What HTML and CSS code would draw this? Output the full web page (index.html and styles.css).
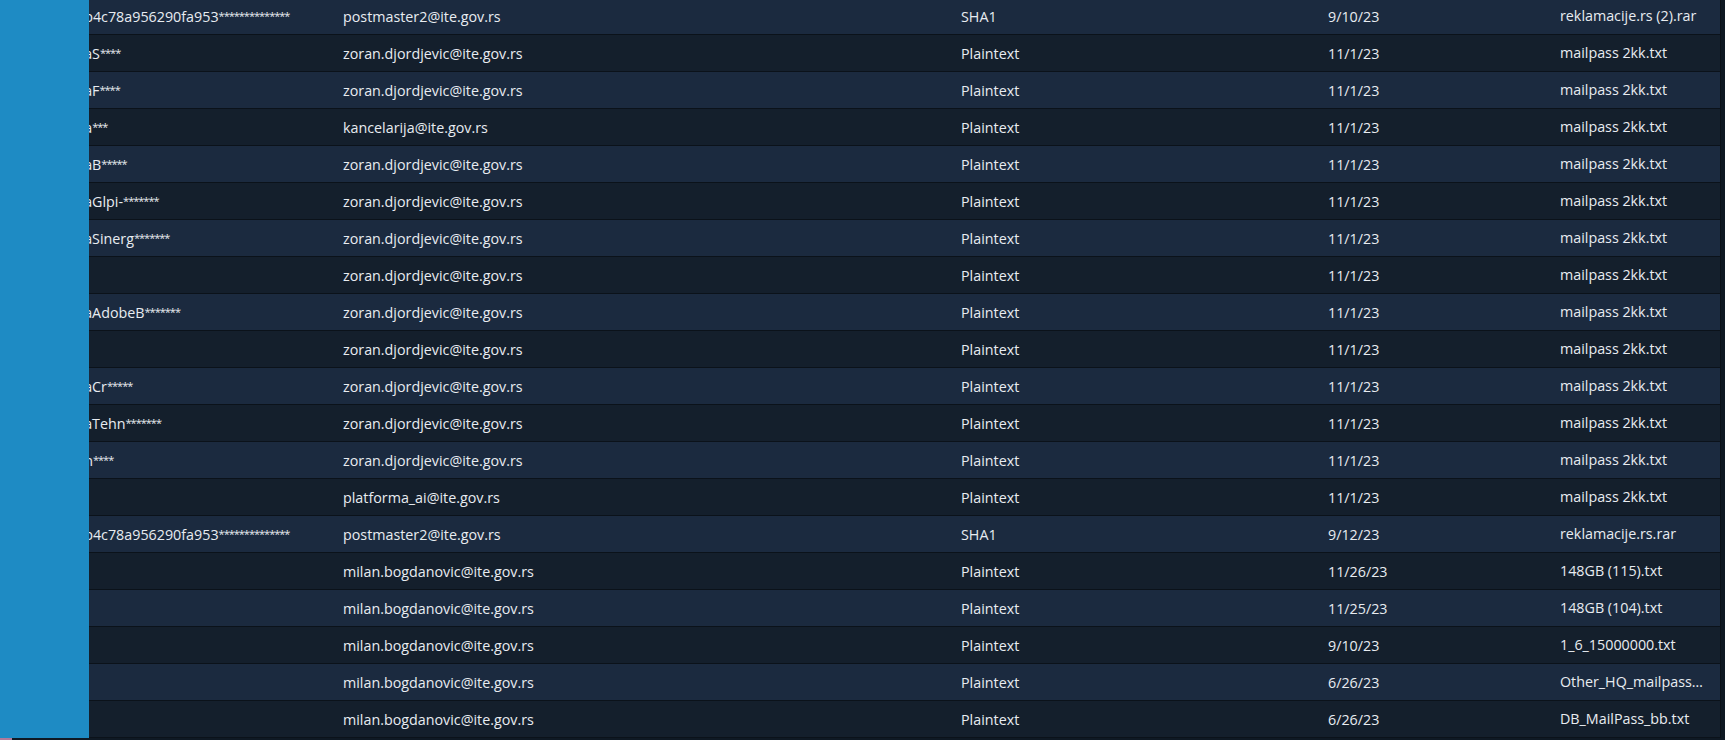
FILE: index.html
```html
<!DOCTYPE html>
<html lang="sr">
<head>
<meta charset="utf-8">
<title>Leaks</title>
<link rel="stylesheet" href="styles.css">
</head>
<body>
<div class="page">
  <div class="main">
    <aside class="sidebar"></aside>
    <div class="viewport">
      <div class="table">
        <div class="row"><div class="cell c1">0b4c78a956290fa953<span class="mask">**************</span></div><div class="cell">postmaster2@ite.gov.rs</div><div class="cell">SHA1</div><div class="cell">9/10/23</div><div class="cell c5">reklamacije.rs (2).rar</div></div>
        <div class="row"><div class="cell c1">0aS<span class="mask">****</span></div><div class="cell">zoran.djordjevic@ite.gov.rs</div><div class="cell">Plaintext</div><div class="cell">11/1/23</div><div class="cell c5">mailpass 2kk.txt</div></div>
        <div class="row"><div class="cell c1">0aF<span class="mask">****</span></div><div class="cell">zoran.djordjevic@ite.gov.rs</div><div class="cell">Plaintext</div><div class="cell">11/1/23</div><div class="cell c5">mailpass 2kk.txt</div></div>
        <div class="row"><div class="cell c1">0a<span class="mask">***</span></div><div class="cell">kancelarija@ite.gov.rs</div><div class="cell">Plaintext</div><div class="cell">11/1/23</div><div class="cell c5">mailpass 2kk.txt</div></div>
        <div class="row"><div class="cell c1">0aB<span class="mask">*****</span></div><div class="cell">zoran.djordjevic@ite.gov.rs</div><div class="cell">Plaintext</div><div class="cell">11/1/23</div><div class="cell c5">mailpass 2kk.txt</div></div>
        <div class="row"><div class="cell c1">0aGlpi-<span class="mask">*******</span></div><div class="cell">zoran.djordjevic@ite.gov.rs</div><div class="cell">Plaintext</div><div class="cell">11/1/23</div><div class="cell c5">mailpass 2kk.txt</div></div>
        <div class="row"><div class="cell c1">0aSinerg<span class="mask">*******</span></div><div class="cell">zoran.djordjevic@ite.gov.rs</div><div class="cell">Plaintext</div><div class="cell">11/1/23</div><div class="cell c5">mailpass 2kk.txt</div></div>
        <div class="row"><div class="cell c1"></div><div class="cell">zoran.djordjevic@ite.gov.rs</div><div class="cell">Plaintext</div><div class="cell">11/1/23</div><div class="cell c5">mailpass 2kk.txt</div></div>
        <div class="row"><div class="cell c1">0aAdobeB<span class="mask">*******</span></div><div class="cell">zoran.djordjevic@ite.gov.rs</div><div class="cell">Plaintext</div><div class="cell">11/1/23</div><div class="cell c5">mailpass 2kk.txt</div></div>
        <div class="row"><div class="cell c1"></div><div class="cell">zoran.djordjevic@ite.gov.rs</div><div class="cell">Plaintext</div><div class="cell">11/1/23</div><div class="cell c5">mailpass 2kk.txt</div></div>
        <div class="row"><div class="cell c1">0aCr<span class="mask">*****</span></div><div class="cell">zoran.djordjevic@ite.gov.rs</div><div class="cell">Plaintext</div><div class="cell">11/1/23</div><div class="cell c5">mailpass 2kk.txt</div></div>
        <div class="row"><div class="cell c1">0aTehn<span class="mask">*******</span></div><div class="cell">zoran.djordjevic@ite.gov.rs</div><div class="cell">Plaintext</div><div class="cell">11/1/23</div><div class="cell c5">mailpass 2kk.txt</div></div>
        <div class="row"><div class="cell c1">0n<span class="mask">****</span></div><div class="cell">zoran.djordjevic@ite.gov.rs</div><div class="cell">Plaintext</div><div class="cell">11/1/23</div><div class="cell c5">mailpass 2kk.txt</div></div>
        <div class="row"><div class="cell c1"></div><div class="cell">platforma_ai@ite.gov.rs</div><div class="cell">Plaintext</div><div class="cell">11/1/23</div><div class="cell c5">mailpass 2kk.txt</div></div>
        <div class="row"><div class="cell c1">0b4c78a956290fa953<span class="mask">**************</span></div><div class="cell">postmaster2@ite.gov.rs</div><div class="cell">SHA1</div><div class="cell">9/12/23</div><div class="cell c5">reklamacije.rs.rar</div></div>
        <div class="row"><div class="cell c1"></div><div class="cell">milan.bogdanovic@ite.gov.rs</div><div class="cell">Plaintext</div><div class="cell">11/26/23</div><div class="cell c5">148GB (115).txt</div></div>
        <div class="row"><div class="cell c1"></div><div class="cell">milan.bogdanovic@ite.gov.rs</div><div class="cell">Plaintext</div><div class="cell">11/25/23</div><div class="cell c5">148GB (104).txt</div></div>
        <div class="row"><div class="cell c1"></div><div class="cell">milan.bogdanovic@ite.gov.rs</div><div class="cell">Plaintext</div><div class="cell">9/10/23</div><div class="cell c5">1_6_15000000.txt</div></div>
        <div class="row"><div class="cell c1"></div><div class="cell">milan.bogdanovic@ite.gov.rs</div><div class="cell">Plaintext</div><div class="cell">6/26/23</div><div class="cell c5">Other_HQ_mailpass_combo_2023.txt</div></div>
        <div class="row"><div class="cell c1"></div><div class="cell">milan.bogdanovic@ite.gov.rs</div><div class="cell">Plaintext</div><div class="cell">6/26/23</div><div class="cell c5">DB_MailPass_bb.txt</div></div>
      </div>
    </div>
    <div class="track"></div>
  </div>
  <div class="footer"><span class="footer-mark"></span></div>
</div>
</body>
</html>
```

FILE: styles.css
```css
* { box-sizing: border-box; }
html, body {
  margin: 0;
  padding: 0;
  background: #0f1924;
  overflow: hidden;
}
body {
  font-family: "Open Sans", "Liberation Sans", sans-serif;
  font-size: 14.3px;
  color: #e8ecf1;
}
.page {
  width: 1725px;
  height: 740px;
  display: flex;
  flex-direction: column;
}
.main {
  display: flex;
  height: 738px;
  overflow: hidden;
}
.sidebar {
  width: 89px;
  flex: none;
  background: #1e8bc4;
}
.viewport {
  flex: 1;
  overflow: hidden;
}
.track {
  width: 5px;
  flex: none;
  background: #0e1822;
  border-left: 1px solid #0a1118;
}
.table {
  margin-left: -29px;
  margin-top: -2px;
  display: flex;
  flex-direction: column;
}
.row {
  display: grid;
  grid-template-columns: 267px 618px 367px 232px 176px;
  height: 37px;
  border-bottom: 1px solid #0b121a;
  background: #1b2a3f;
}
.row:nth-child(even) {
  background: #141f2c;
}
.cell {
  padding: 0 16px;
  display: flex;
  align-items: center;
  white-space: nowrap;
  overflow: hidden;
  min-width: 0;
}
.mask {
  font-size: 11px;
  letter-spacing: -1px;
  align-self: center;
  margin-top: -2px;
}
.c5 {
  display: block;
  line-height: 36px;
  text-overflow: ellipsis;
  padding-right: 12px;
}
.footer {
  height: 2px;
  background: #0f1924;
}
.footer-mark {
  display: block;
  width: 12px;
  height: 2px;
  background: #b07a9a;
}
```
